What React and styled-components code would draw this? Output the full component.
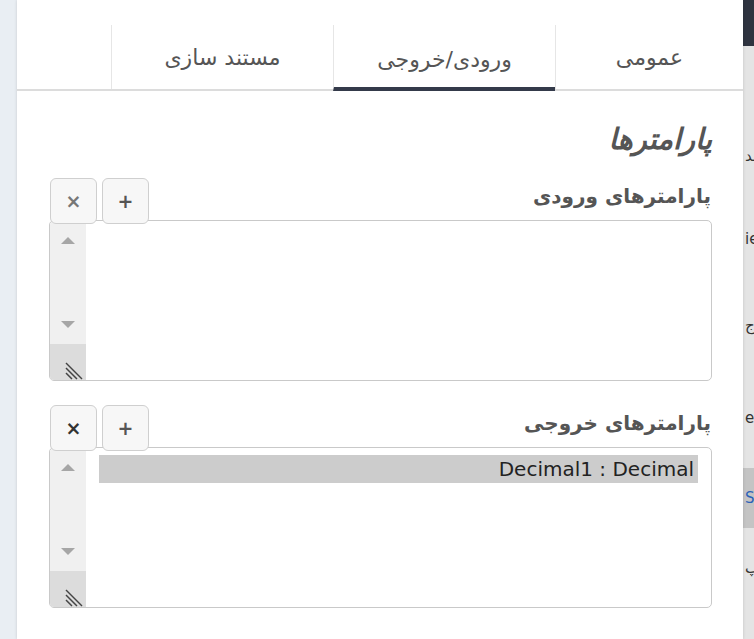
import React from 'react';
import styled, { createGlobalStyle } from 'styled-components';

const GlobalStyle = createGlobalStyle`
  html, body {
    margin: 0;
    padding: 0;
    height: 100%;
    overflow: hidden;
    background: #e9eef3;
  }
  #root {
    height: 100%;
  }
`;

const Page = styled.div`
  display: flex;
  height: 639px;
  font-family: "DejaVu Sans", Tahoma, sans-serif;
`;

const LeftStrip = styled.div`
  width: 17px;
  background: #e9eef3;
  flex-shrink: 0;
`;

const Panel = styled.div`
  width: 726px;
  flex-shrink: 0;
  background: #fff;
  direction: rtl;
  box-shadow: 0 0 3px rgba(0, 0, 0, 0.15);
  position: relative;
  z-index: 1;
`;

const RightStrip = styled.div`
  flex: 1;
  display: flex;
  flex-direction: column;
  background: #e4e4e4;
  overflow: hidden;
  direction: ltr;
`;

const DarkBar = styled.div`
  height: 46px;
  background: #2f3440;
  flex-shrink: 0;
`;

const Fragment = styled.div`
  height: ${p => p.h}px;
  line-height: ${p => p.h}px;
  font-size: 15px;
  white-space: nowrap;
  padding-left: 2px;
  color: ${p => (p.blue ? '#2a62b8' : '#333')};
  background: ${p => (p.band ? '#c4c4c4' : 'transparent')};
`;

const TabBar = styled.div`
  display: flex;
  margin-top: 25px;
  height: 64px;
  border-bottom: 2px solid #dcdcdc;
`;

const Tab = styled.div`
  width: ${p => p.w}px;
  display: flex;
  align-items: center;
  justify-content: center;
  font-size: 22px;
  color: #555;
  border-left: 1px solid #e6e6e6;
  box-sizing: border-box;
  margin-bottom: ${p => (p.active ? '-2px' : '0')};
  border-bottom: ${p => (p.active ? '4px solid #343a4a' : 'none')};
  padding-top: ${p => (p.active ? '6px' : '0')};
`;

const Body = styled.div`
  padding: 0 31px 0 32px;
`;

const Title = styled.h2`
  margin: 28px 0 0;
  font-size: 29px;
  font-weight: bold;
  font-style: italic;
  color: #555;
  line-height: 40px;
`;

const Section = styled.div`
  margin-top: ${p => p.top}px;
`;

const HeaderRow = styled.div`
  display: flex;
  justify-content: space-between;
  align-items: flex-start;
  margin-bottom: -4px;
  position: relative;
  z-index: 2;
`;

const Label = styled.div`
  font-size: 20px;
  font-weight: bold;
  color: #555;
  margin-top: 6px;
  padding-right: 1px;
`;

const ButtonGroup = styled.div`
  display: flex;
  gap: 5px;
  margin-left: 1px;
`;

const IconButton = styled.button`
  width: 47px;
  height: 46px;
  box-sizing: border-box;
  border: 1px solid #cfcfcf;
  border-radius: 6px;
  background: #f7f7f7;
  color: ${p => p.color || '#555'};
  font-family: "DejaVu Sans", sans-serif;
  font-size: 19px;
  font-weight: bold;
  padding: 0;
  display: flex;
  align-items: center;
  justify-content: center;
`;

const ListBox = styled.div`
  height: ${p => p.h}px;
  box-sizing: border-box;
  border: 1px solid #c9c9c9;
  border-radius: 5px;
  display: flex;
  overflow: hidden;
`;

const ListItems = styled.div`
  flex: 1;
  padding: 7px 13px 0;
`;

const Item = styled.div`
  height: 28px;
  line-height: 28px;
  background: #cccccc;
  direction: ltr;
  text-align: right;
  font-size: 20px;
  color: #222;
  padding-right: 4px;
`;

const ScrollBar = styled.div`
  width: 36px;
  background: #f0f0f0;
  display: flex;
  flex-direction: column;
  align-items: center;
  border-top-left-radius: 4px;
`;

const Arrow = styled.div`
  width: 0;
  height: 0;
  border-left: 7px solid transparent;
  border-right: 7px solid transparent;
  ${p =>
    p.up
      ? 'border-bottom: 7px solid #a6a6a6; margin-top: 16px;'
      : 'border-top: 7px solid #a6a6a6; margin-top: 77px;'}
`;

const Grip = styled.div`
  margin-top: auto;
  width: 100%;
  height: 36px;
  background: #dcdcdc;
  display: flex;
  align-items: flex-end;
`;

const Scroller = () => (
  <ScrollBar>
    <Arrow up />
    <Arrow />
    <Grip>
      <svg width="22" height="20" viewBox="0 0 22 20">
        <g stroke="#444" strokeWidth="1.5">
          <line x1="2" y1="3" x2="18" y2="19" />
          <line x1="2" y1="8" x2="13" y2="19" />
          <line x1="2" y1="13" x2="8" y2="19" />
        </g>
      </svg>
    </Grip>
  </ScrollBar>
);

const ParamSection = ({ label, top, height, items, closeColor }) => (
  <Section top={top}>
    <HeaderRow>
      <Label>{label}</Label>
      <ButtonGroup>
        <IconButton>+</IconButton>
        <IconButton color={closeColor}>×</IconButton>
      </ButtonGroup>
    </HeaderRow>
    <ListBox h={height}>
      <ListItems>
        {items.map(item => (
          <Item key={item}>{item}</Item>
        ))}
      </ListItems>
      <Scroller />
    </ListBox>
  </Section>
);

const App = () => {
  return (
    <>
      <GlobalStyle />
      <Page>
        <LeftStrip />
        <Panel>
          <TabBar>
            <Tab w={188}>عمومی</Tab>
            <Tab w={222} active>ورودی/خروجی</Tab>
            <Tab w={222}>مستند سازی</Tab>
          </TabBar>
          <Body>
            <Title>پارامترها</Title>
            <ParamSection
              label="پارامترهای ورودی"
              top={19}
              height={161}
              items={[]}
              closeColor="#777"
            />
            <ParamSection
              label="پارامترهای خروجی"
              top={24}
              height={161}
              items={['Decimal1 : Decimal']}
              closeColor="#333"
            />
          </Body>
        </Panel>
        <RightStrip>
          <DarkBar />
          <Fragment h={70} />
          <Fragment h={80}>ـد</Fragment>
          <Fragment h={86}>ie</Fragment>
          <Fragment h={86}>ج</Fragment>
          <Fragment h={100}>e</Fragment>
          <Fragment h={60} band blue>Sa</Fragment>
          <Fragment h={80}>پ</Fragment>
        </RightStrip>
      </Page>
    </>
  );
};

export default App;
